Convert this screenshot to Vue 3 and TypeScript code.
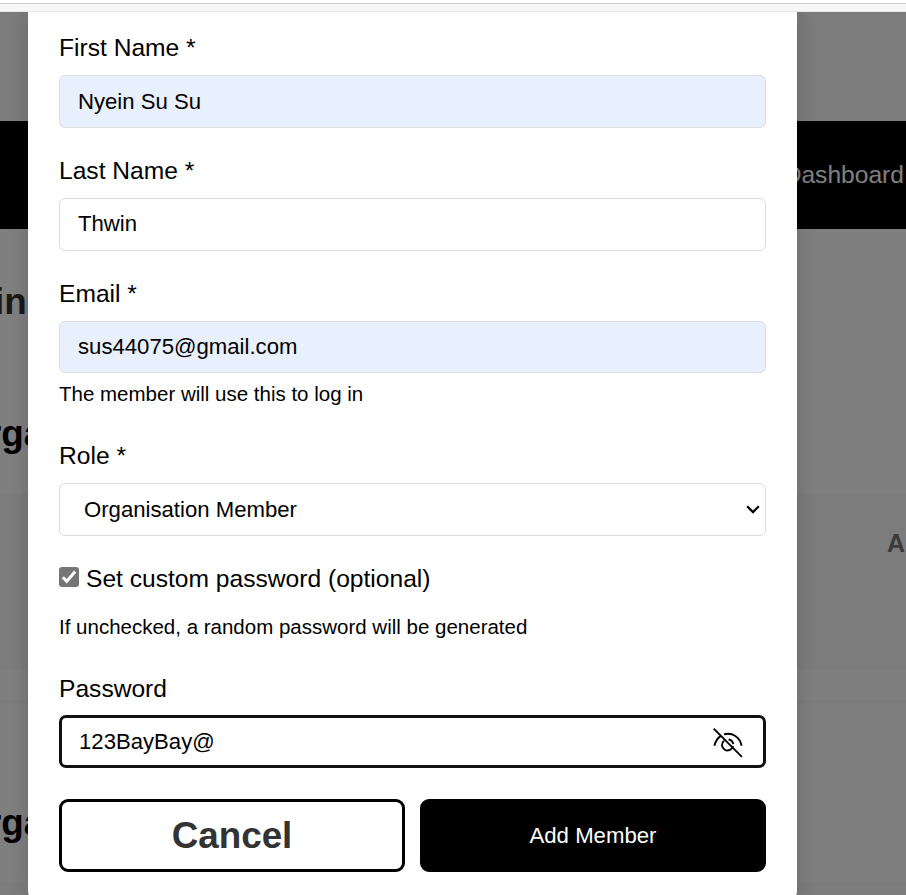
<script setup lang="ts">
import { ref } from 'vue'

const firstName = ref('Nyein Su Su')
const lastName = ref('Thwin')
const email = ref('sus44075@gmail.com')
const role = ref('member')
const custom = ref(true)
const password = ref('123BayBay@')
const visible = ref(true)
</script>

<template>
  <div class="window">
    <div class="chrome"></div>
    <div class="viewport">
      <div class="page">
        <div class="topbar"></div>
        <nav class="nav"><a class="nav-link">Dashboard</a></nav>
        <section class="heading"><h1>in</h1></section>
        <section class="subheading"><h2>rga</h2></section>
        <section class="panel"><span>A</span></section>
        <div class="space"></div>
        <section class="lower"><h2>rga</h2></section>
        <div class="footer"></div>
      </div>
      <div class="overlay">
        <form class="modal" @submit.prevent>
          <div class="field">
            <label for="first">First Name *</label>
            <input id="first" v-model="firstName" class="control filled" type="text" />
          </div>
          <div class="field last">
            <label for="last">Last Name *</label>
            <input id="last" v-model="lastName" class="control" type="text" />
          </div>
          <div class="field email">
            <label for="email">Email *</label>
            <input id="email" v-model="email" class="control filled" type="text" />
            <p class="hint">The member will use this to log in</p>
          </div>
          <div class="field role">
            <label for="role">Role *</label>
            <div class="select-wrap">
              <select id="role" v-model="role" class="control select">
                <option value="member">Organisation Member</option>
              </select>
              <svg class="chevron" viewBox="0 0 14 9"><path d="M1.2 1.3 7 7.1l5.800-5.800" /></svg>
            </div>
          </div>
          <div class="check-group">
            <label class="check">
              <input v-model="custom" type="checkbox" />
              <svg viewBox="0 0 20 20"><path d="M3.800 10.300 7.700 14.200 16.200 4.600" /></svg>
              <span>Set custom password (optional)</span>
            </label>
            <p class="hint">If unchecked, a random password will be generated</p>
          </div>
          <div class="field password">
            <label for="password">Password</label>
            <div class="password-box">
              <input id="password" v-model="password" :type="visible ? 'text' : 'password'" />
              <button class="eye" type="button" @click="visible = !visible">
                <svg viewBox="0 0 30 30">
                  <path d="M1.400 17.800C2.300 13.500 4.700 9.800 8.300 7.600M11 6.300C19.500 4 27 9.300 28.600 17.800" />
                  <path d="M11 12.700A5.500 5.500 0 1 0 19.900 17.800M15.600 11.500a5.500 5.500 0 0 1 4.600 4.600" />
                  <path d="M.700 .700 28.900 28.900" />
                </svg>
              </button>
            </div>
          </div>
          <div class="actions">
            <button class="cancel" type="button">Cancel</button>
            <button class="add" type="submit">Add Member</button>
          </div>
        </form>
      </div>
    </div>
  </div>
</template>

<style>
body {
  margin: 0;
  overflow: hidden;
}
</style>

<style scoped>
* {
  box-sizing: border-box;
}
.window {
  display: flex;
  flex-direction: column;
  width: 906px;
  height: 895px;
  overflow: hidden;
  font-family: "Liberation Sans", Arial, sans-serif;
  color: #000;
}
.chrome {
  height: 12px;
  flex: none;
  border-bottom: 1px solid #e9e9e9;
  background: linear-gradient(#fff 3px, #cfcfcf 3px, #cfcfcf 4px, #f7f7f7 4px);
}
.viewport {
  position: relative;
  flex: 1;
  overflow: hidden;
}
.page {
  display: flex;
  flex-direction: column;
  height: 100%;
  background: #fff;
}
.topbar {
  height: 109px;
  background: #f9f9f9;
}
.nav {
  display: flex;
  justify-content: flex-end;
  align-items: center;
  height: 108px;
  padding-right: 2px;
  background: #000;
}
.nav-link {
  color: #fff;
  font-size: 24.6px;
}
h1,
h2 {
  margin: 0;
  font-size: 36.8px;
  line-height: 42px;
}
h1 {
  margin-left: -6px;
  color: #333;
}
h2 {
  margin-left: -13px;
}
.heading {
  height: 144px;
  padding-top: 52px;
}
.subheading {
  height: 120px;
  padding-top: 40px;
}
.panel {
  display: flex;
  justify-content: flex-end;
  height: 176px;
  padding: 36px 1px 0;
  background: #f9f9f9;
  color: #777;
  font-size: 25px;
  font-weight: bold;
  line-height: 28px;
}
.space {
  height: 35px;
  border-bottom: 4px solid #f9f9f9;
}
.lower {
  flex: 1;
  padding-top: 98px;
}
.footer {
  height: 13px;
  background: #f9f9f9;
}
.overlay {
  position: absolute;
  inset: 0;
  padding: 0 109px 0 28px;
  background: rgba(0, 0, 0, 0.5);
}
.modal {
  height: 885px;
  padding: 21px 31px 0;
  background: #fff;
  border-radius: 0 0 5px 5px;
  box-shadow: 0 0 20px rgba(0, 0, 0, 0.18);
}
.field {
  display: flex;
  flex-direction: column;
  gap: 12px;
  margin-bottom: 28px;
  font-size: 24.6px;
  line-height: 30px;
}
.control {
  width: 100%;
  height: 53px;
  margin: 0;
  padding: 0 18px;
  border: 1px solid #dcdde0;
  border-radius: 6px;
  outline: none;
  background: #fff;
  color: #000;
  font: 22.15px "Liberation Sans", Arial, sans-serif;
}
.filled {
  background: #e8effd;
}
.last .control {
  padding-bottom: 2px;
}
.email .control {
  height: 52px;
}
.hint {
  margin: 0;
  font-size: 20.5px;
  line-height: 24px;
}
.email .hint {
  margin-top: -3px;
}
.email {
  margin-bottom: 35px;
}
.select-wrap {
  position: relative;
  display: flex;
}
.select {
  appearance: none;
  padding-left: 24px;
}
.chevron {
  position: absolute;
  right: 6px;
  top: 22px;
  width: 14px;
  height: 9px;
  fill: none;
  stroke: #000;
  stroke-width: 2.2;
}
.check-group {
  display: flex;
  flex-direction: column;
  gap: 21px;
  margin-bottom: 35px;
}
.check {
  display: flex;
  align-items: flex-start;
  gap: 7px;
  font-size: 24.6px;
  line-height: 30px;
}
.check input {
  position: absolute;
  opacity: 0;
}
.check svg {
  width: 20px;
  height: 20px;
  margin-top: 3px;
  border-radius: 3px;
  background: #767676;
  fill: none;
  stroke: #fff;
  stroke-width: 3;
}
.password {
  gap: 11px;
  margin-bottom: 31px;
}
.password-box {
  display: flex;
  align-items: center;
  height: 53px;
  padding: 0 20px 0 17px;
  border: 3px solid #111;
  border-radius: 7px;
}
.password-box input {
  flex: 1;
  min-width: 0;
  padding: 0;
  border: 0;
  outline: 0;
  background: transparent;
  color: #000;
  font: 22.15px "Liberation Sans", Arial, sans-serif;
}
.eye {
  display: flex;
  padding: 2px 0 0;
  border: 0;
  background: none;
}
.eye svg {
  width: 30px;
  height: 30px;
  fill: none;
  stroke: #000;
  stroke-width: 1.9;
}
.actions {
  display: grid;
  grid-template-columns: 1fr 1fr;
  gap: 15px;
}
.actions button {
  height: 73px;
  padding: 0;
  border: 3px solid #000;
  border-radius: 9px;
  font-family: "Liberation Sans", Arial, sans-serif;
}
.actions .cancel {
  background: #fff;
  color: #333;
  font-size: 36.8px;
  font-weight: bold;
}
.actions .add {
  background: #000;
  color: #fff;
  font-size: 22.2px;
}
</style>
